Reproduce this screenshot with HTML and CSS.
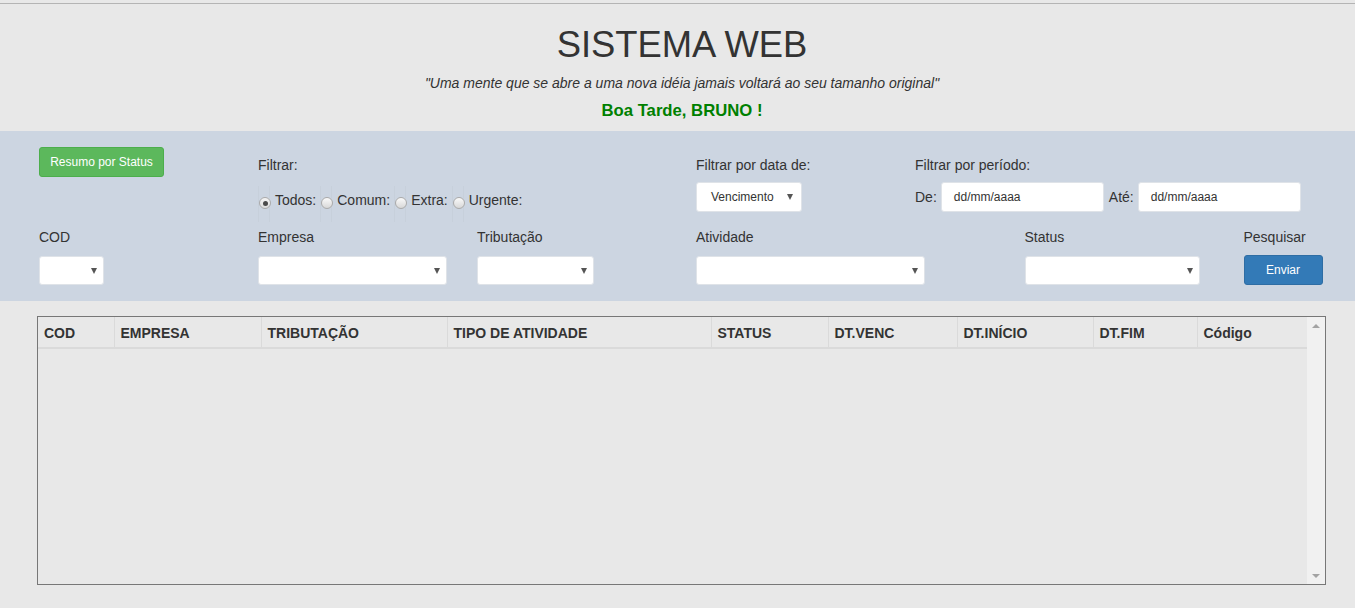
FILE: index.html
```html
<!DOCTYPE html>
<html lang="pt-BR">
<head>
<meta charset="utf-8">
<title>Sistema Web</title>
<link rel="stylesheet" href="styles.css">
</head>
<body>
<div class="page">
  <header class="header">
    <h1 class="title">SISTEMA WEB</h1>
    <p class="quote">"Uma mente que se abre a uma nova idéia jamais voltará ao seu tamanho original"</p>
    <p class="greeting">Boa Tarde, BRUNO !</p>
  </header>

  <section class="panel">
    <div class="row row-top">
      <div class="col c1 s2">
        <button class="btn btn-success">Resumo por Status</button>
      </div>
      <div class="col c3 s4">
        <div class="lbl lbl-top">Filtrar:</div>
        <div class="radios">
          <label class="opt"><span class="rbox"><span class="radio checked"></span></span><span>Todos:</span></label>
          <label class="opt"><span class="rbox"><span class="radio"></span></span><span>Comum:</span></label>
          <label class="opt"><span class="rbox"><span class="radio"></span></span><span>Extra:</span></label>
          <label class="opt"><span class="rbox"><span class="radio"></span></span><span>Urgente:</span></label>
        </div>
      </div>
      <div class="col c7 s2">
        <div class="lbl lbl-top">Filtrar por data de:</div>
        <div class="select sel-venc"><span class="sel-text">Vencimento</span><span class="caret"></span></div>
      </div>
      <div class="col c9 s4">
        <div class="lbl lbl-top">Filtrar por período:</div>
        <div class="period">
          <span class="plbl">De:</span>
          <div class="date">dd/mm/aaaa</div>
          <span class="plbl ate">Até:</span>
          <div class="date">dd/mm/aaaa</div>
        </div>
      </div>
    </div>

    <div class="row row-bottom">
      <div class="col c1 s2">
        <div class="lbl">COD</div>
        <div class="select sel-cod"><span class="caret"></span></div>
      </div>
      <div class="col c3 s2">
        <div class="lbl">Empresa</div>
        <div class="select sel-emp"><span class="caret"></span></div>
      </div>
      <div class="col c5 s2">
        <div class="lbl">Tributação</div>
        <div class="select sel-trib"><span class="caret"></span></div>
      </div>
      <div class="col c7 s3">
        <div class="lbl">Atividade</div>
        <div class="select sel-ativ"><span class="caret"></span></div>
      </div>
      <div class="col c10 s2">
        <div class="lbl">Status</div>
        <div class="select sel-status"><span class="caret"></span></div>
      </div>
      <div class="col c12 s1">
        <div class="lbl">Pesquisar</div>
        <button class="btn btn-primary">Enviar</button>
      </div>
    </div>
  </section>

  <section class="results">
    <div class="grid-box">
      <div class="table-area">
        <table class="data">
          <colgroup>
            <col class="w1"><col class="w2"><col class="w3">
            <col class="w4"><col class="w5"><col class="w6">
            <col class="w7"><col class="w8"><col class="w9">
          </colgroup>
          <thead>
            <tr>
              <th>COD</th><th>EMPRESA</th><th>TRIBUTAÇÃO</th><th>TIPO DE ATIVIDADE</th>
              <th>STATUS</th><th>DT.VENC</th><th>DT.INÍCIO</th><th>DT.FIM</th><th>Código</th>
            </tr>
          </thead>
          <tbody></tbody>
        </table>
      </div>
      <div class="scrollbar">
        <span class="arrow up"></span>
        <span class="arrow down"></span>
      </div>
    </div>
  </section>
</div>
</body>
</html>
```

FILE: styles.css
```css
* { box-sizing: border-box; }

html, body {
  margin: 0;
  padding: 0;
  background: #e8e8e8;
}

body {
  padding-top: 3px;
  font-family: "Liberation Sans", Arial, Helvetica, sans-serif;
  font-size: 14px;
  color: #333;
  height: 608px;
  overflow: hidden;
}

.page {
  border-top: 1px solid #b4b4b4;
}

/* Header */
.header {
  text-align: center;
  padding-top: 21px;
  padding-bottom: 10px;
  padding-left: 9px;
}

.title {
  margin: 0;
  font-size: 36.4px;
  font-weight: 400;
  line-height: 40px;
  color: #333;
}

.quote {
  margin: 8px 0 0;
  font-style: italic;
  font-size: 14px;
  line-height: 20px;
}

.greeting {
  margin: 8px 0 0;
  font-size: 16.7px;
  font-weight: 700;
  line-height: 20px;
  color: #008000;
}

/* Filter panel */
.panel {
  background: #ccd5e1;
  padding: 16px 24px 16px;
}

.row {
  display: grid;
  grid-template-columns: repeat(12, 109.5px);
}

.row-bottom { margin-top: 15px; }

.col { padding: 0 15px; }
.c1 { grid-column-start: 1; }
.c3 { grid-column-start: 3; }
.c5 { grid-column-start: 5; }
.c7 { grid-column-start: 7; }
.c9 { grid-column-start: 9; }
.c10 { grid-column-start: 10; }
.c12 { grid-column-start: 12; }
.s1 { grid-column-end: span 1; }
.s2 { grid-column-end: span 2; }
.s3 { grid-column-end: span 3; }
.s4 { grid-column-end: span 4; }

.lbl {
  line-height: 20px;
  height: 20px;
  white-space: nowrap;
  margin-bottom: 9px;
}
.lbl-top {
  margin-top: 8px;
  margin-bottom: 7px;
}

.btn {
  display: inline-block;
  font-family: inherit;
  font-size: 12px;
  line-height: 18px;
  padding: 5px 10px;
  border-radius: 3px;
  border: 1px solid transparent;
  color: #fff;
  cursor: pointer;
  white-space: nowrap;
}
.btn-success {
  background: #5cb85c;
  border-color: #4cae4c;
  width: 125px;
  height: 30px;
}
.btn-primary {
  background: #337ab7;
  border-color: #2e6da4;
  width: 79px;
  height: 30px;
  margin-top: -1px;
}

/* radios */
.radios {
  display: flex;
  gap: 4px;
  height: 30px;
  padding-top: 8px;
  line-height: 20px;
  white-space: nowrap;
}
.opt {
  display: flex;
  align-items: flex-start;
  gap: 4px;
}
.opt span:last-child { margin-left: 1px; }
.rbox {
  width: 12px;
  height: 36px;
  margin-top: -4px;
  padding-top: 11px;
  border-left: 1px solid rgba(0, 0, 0, 0.022);
  border-right: 1px solid rgba(0, 0, 0, 0.022);
  display: flex;
  justify-content: center;
}
.radio {
  width: 12px;
  height: 12px;
  flex: none;
  margin-left: -1px;
  margin-right: -1px;
  border-radius: 50%;
  border: 1px solid #aaaaaa;
  background: linear-gradient(#fafafa, #d8d8d8);
  display: flex;
  align-items: center;
  justify-content: center;
}
.radio.checked {
  background: linear-gradient(#f4f4f4, #dcdcdc);
}
.radio.checked::after {
  content: "";
  width: 5px;
  height: 5px;
  border-radius: 50%;
  background: #4a4a4a;
}

/* selects */
.select {
  height: 29px;
  background: #fff;
  border: 1px solid #dfe3e8;
  border-radius: 3px;
  display: flex;
  align-items: center;
  justify-content: flex-end;
  padding-right: 6px;
}
.sel-text {
  flex: 1;
  font-size: 12px;
  color: #333;
  padding-left: 14px;
}
.caret {
  width: 0;
  height: 0;
  border-left: 3.5px solid transparent;
  border-right: 3.5px solid transparent;
  border-top: 6px solid #555;
}
.sel-venc { width: 106px; height: 30px; padding-right: 8px; }
.sel-cod { width: 65px; }
.sel-emp { width: 189px; }
.sel-trib { width: 117px; }
.sel-ativ { width: 229px; }
.sel-status { width: 175px; }

/* period */
.period {
  display: flex;
  align-items: center;
  height: 30px;
  white-space: nowrap;
}
.plbl { margin-right: 4px; }
.ate { margin-left: 5px; }
.date {
  width: 163px;
  height: 30px;
  background: #fff;
  border: 1px solid #dfe3e8;
  border-radius: 3px;
  font-size: 12px;
  line-height: 28px;
  color: #333;
  padding-left: 12px;
}

/* Results */
.results {
  padding: 15px 29px 0 37px;
}

.grid-box {
  display: flex;
  width: 1289px;
  height: 269px;
  border: 1px solid #777;
}

.table-area {
  flex: 1;
  overflow: hidden;
}

.data {
  border-collapse: collapse;
  table-layout: fixed;
  width: 1269px;
}
.w1 { width: 76px; }
.w2 { width: 147px; }
.w3 { width: 186px; }
.w4 { width: 264px; }
.w5 { width: 117px; }
.w6 { width: 129px; }
.w7 { width: 136px; }
.w8 { width: 104px; }
.w9 { width: 110px; }

.data th {
  text-align: left;
  font-weight: 700;
  font-size: 14px;
  line-height: 20px;
  padding: 6px 6px 4px 6px;
  border-bottom: 2px solid #dadada;
  border-left: 1px solid #dadada;
  white-space: nowrap;
}
.data th:first-child { border-left: 0; }
.data th:last-child { border-right: 1px solid #dadada; }

.scrollbar {
  width: 18px;
  background: #f1f1f1;
  display: flex;
  flex-direction: column;
  justify-content: space-between;
  align-items: center;
  padding: 7px 0 6px;
}
.arrow {
  width: 0;
  height: 0;
  border-left: 4px solid transparent;
  border-right: 4px solid transparent;
}
.arrow.up { border-bottom: 4px solid #a3a3a3; }
.arrow.down { border-top: 4px solid #a3a3a3; }
```
